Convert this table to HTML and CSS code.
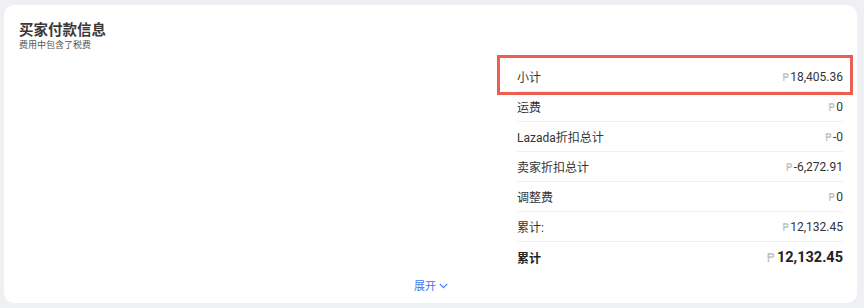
FILE: index.html
```html
<!DOCTYPE html>
<html lang="zh">
<head>
<meta charset="utf-8">
<title>买家付款信息</title>
<link rel="stylesheet" href="styles.css">
</head>
<body>
<div class="card">
  <div class="head">
    <div class="title">买家付款信息</div>
    <div class="sub">费用中包含了税费</div>
  </div>
  <div class="summary">
    <div class="row highlight">
      <span class="label">小计</span>
      <span class="val"><span class="cur">₱</span>18,405.36</span>
      <span class="mark"></span>
    </div>
    <div class="row"><span class="label">运费</span><span class="val"><span class="cur">₱</span>0</span></div>
    <div class="row"><span class="label">Lazada折扣总计</span><span class="val"><span class="cur">₱</span>-0</span></div>
    <div class="row"><span class="label">卖家折扣总计</span><span class="val"><span class="cur">₱</span>-6,272.91</span></div>
    <div class="row"><span class="label">调整费</span><span class="val"><span class="cur">₱</span>0</span></div>
    <div class="row"><span class="label">累计:</span><span class="val"><span class="cur">₱</span>12,132.45</span></div>
    <div class="row total"><span class="label">累计</span><span class="val"><span class="cur">₱</span>12,132.45</span></div>
  </div>
  <div class="expand">展开<svg class="chev" width="9" height="6" viewBox="0 0 9 6"><polyline points="0.8,0.8 4.5,4.6 8.2,0.8" fill="none" stroke="#3d7bf2" stroke-width="1.1"/></svg></div>
</div>
</body>
</html>
```
FILE: styles.css
```css
html, body {
  margin: 0;
  padding: 0;
}
body {
  background: #eef0f4;
  padding: 5px 7px 6px 4px;
  font-family: Roboto, "Noto Sans CJK SC", sans-serif;
  color: #333;
}
.card {
  width: 853px;
  box-sizing: border-box;
  background: #fff;
  border-radius: 10px;
  padding: 14px 14px 10px 15px;
}
.head .title {
  font-size: 14.5px;
  line-height: 19px;
  font-weight: 700;
  color: #3a3a3a;
  font-family: "Noto Sans CJK SC", sans-serif;
}
.head .sub {
  margin-top: 2px;
  font-size: 9px;
  line-height: 10px;
  color: #555;
  font-family: "Noto Sans CJK SC", sans-serif;
}
.summary {
  margin-top: 12px;
  margin-left: auto;
  width: 326px;
}
.row {
  position: relative;
  height: 30px;
  box-sizing: border-box;
  display: flex;
  align-items: center;
  justify-content: space-between;
  border-bottom: 1px solid #efefef;
  font-size: 12px;
}
.label {
  font-family: Roboto, "Noto Sans CJK SC", sans-serif;
  color: #333;
}
.val {
  display: flex;
  align-items: center;
  color: #333;
}
.cur {
  font-family: "DejaVu Sans", sans-serif;
  font-size: 10.5px;
  color: #bdbdbd;
  margin-right: 1px;
}
.row.total {
  border-bottom: none;
}
.row.total .label {
  font-weight: 700;
  color: #222;
}
.row.total .val {
  font-size: 14.5px;
  font-weight: 700;
  color: #222;
}
.row.total .cur {
  font-size: 13px;
  font-weight: 400;
  margin-right: 2px;
}
.mark {
  position: absolute;
  top: -7px;
  bottom: -4px;
  left: -20px;
  right: -10px;
  border: 3px solid #ec5f50;
  box-sizing: border-box;
}
.expand {
  margin-top: 5px;
  height: 16px;
  line-height: 16px;
  display: flex;
  align-items: center;
  justify-content: center;
  gap: 3px;
  font-size: 11px;
  color: #3d7bf2;
  font-family: "Noto Sans CJK SC", sans-serif;
}
.chev {
  display: block;
  margin-top: 1px;
}
```
